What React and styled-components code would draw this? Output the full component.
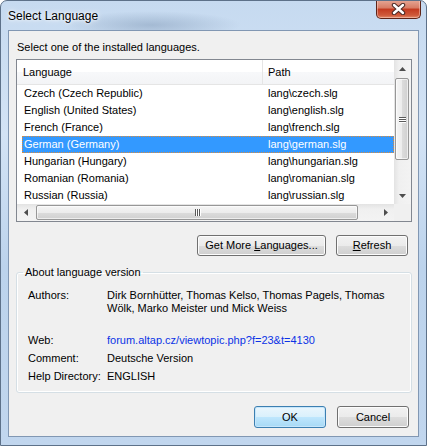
import React from "react";
import styled, { createGlobalStyle } from "styled-components";

const GlobalStyle = createGlobalStyle`
  html, body {
    margin: 0;
    padding: 0;
    background: #ffffff;
  }
  body {
    font-family: "Liberation Sans", Arial, sans-serif;
    font-size: 11px;
    color: #000;
  }
`;

const languages = [
  { name: "Czech (Czech Republic)", path: "lang\\czech.slg" },
  { name: "English (United States)", path: "lang\\english.slg" },
  { name: "French (France)", path: "lang\\french.slg" },
  { name: "German (Germany)", path: "lang\\german.slg", selected: true },
  { name: "Hungarian (Hungary)", path: "lang\\hungarian.slg" },
  { name: "Romanian (Romania)", path: "lang\\romanian.slg" },
  { name: "Russian (Russia)", path: "lang\\russian.slg" },
];

const CloseGlyph = () => (
  <svg width="15" height="12" viewBox="0 0 15 12">
    <path d="M3 2 L12 10 M12 2 L3 10" stroke="#4a2a26" strokeWidth="4.4" strokeLinecap="round" />
    <path d="M3 2 L12 10 M12 2 L3 10" stroke="#ffffff" strokeWidth="2.4" strokeLinecap="round" />
  </svg>
);

const Arrow = ({ dir }) => {
  const d = {
    up: "M0 4 L3.5 0 L7 4 Z",
    down: "M0 0 L3.5 4 L7 0 Z",
    left: "M4 0 L0 3.5 L4 7 Z",
    right: "M0 0 L4 3.5 L0 7 Z",
  }[dir];
  const vertical = dir === "up" || dir === "down";
  return (
    <svg width={vertical ? 7 : 4} height={vertical ? 4 : 7} viewBox={vertical ? "0 0 7 4" : "0 0 4 7"}>
      <path d={d} fill="#4d4d4d" />
    </svg>
  );
};

const App = () => {
  return (
    <>
      <GlobalStyle />
      <Window>
        <TitleBar>
          <Title>Select Language</Title>
          <CloseButton>
            <CloseGlyph />
          </CloseButton>
        </TitleBar>
        <Client>
          <Prompt>Select one of the installed languages.</Prompt>
          <ListView>
            <ListBody>
              <Header>
                <HeaderCell>Language</HeaderCell>
                <HeaderCell $sep>Path</HeaderCell>
              </Header>
              {languages.map((l) => (
                <Row key={l.name} $selected={l.selected}>
                  <Cell>{l.name}</Cell>
                  <Cell $second>{l.path}</Cell>
                </Row>
              ))}
            </ListBody>
            <VScroll>
              <ScrollArrow>
                <Arrow dir="up" />
              </ScrollArrow>
              <VThumb>
                <Grip $vertical>
                  <span />
                  <span />
                  <span />
                </Grip>
              </VThumb>
              <Spacer />
              <ScrollArrow>
                <Arrow dir="down" />
              </ScrollArrow>
            </VScroll>
            <HScroll>
              <ScrollArrow>
                <Arrow dir="left" />
              </ScrollArrow>
              <HThumb>
                <Grip>
                  <span />
                  <span />
                  <span />
                </Grip>
              </HThumb>
              <Spacer />
              <ScrollArrow>
                <Arrow dir="right" />
              </ScrollArrow>
            </HScroll>
            <Corner />
          </ListView>
          <ActionRow>
            <Button $width={129}>
              Get More{" "}<u>L</u>anguages...
            </Button>
            <Button $width={72}>
              <u>R</u>efresh
            </Button>
          </ActionRow>
          <Group>
            <Legend>About language version</Legend>
            <InfoGrid>
              <Label $tight>Authors:</Label>
              <Value $tight>
                Dirk Bornhütter, Thomas Kelso, Thomas Pagels, Thomas
                <br />
                Wölk, Marko Meister und Mick Weiss
              </Value>
              <Label $gap>Web:</Label>
              <Link $gap>forum.altap.cz/viewtopic.php?f=23&amp;t=4130</Link>
              <Label>Comment:</Label>
              <Value>Deutsche Version</Value>
              <Label>Help Directory:</Label>
              <Value>ENGLISH</Value>
            </InfoGrid>
          </Group>
          <FooterRow>
            <Button $width={72} $height={22} $default>
              OK
            </Button>
            <Button $width={72} $height={22}>
              Cancel
            </Button>
          </FooterRow>
        </Client>
      </Window>
    </>
  );
};

const Window = styled.div`
  width: 427px;
  height: 446px;
  box-sizing: border-box;
  border: 1px solid #5d7189;
  border-radius: 7px 7px 0 0;
  background:
    radial-gradient(ellipse 90px 14px at 150px 24px, rgba(120, 145, 175, 0.45), transparent),
    linear-gradient(180deg, #c6daf0 0%, #d3e3f5 30%, #bcd3ec 60%, #c1d6ee 100%);
  display: flex;
  flex-direction: column;
  overflow: hidden;
`;

const TitleBar = styled.div`
  height: 29px;
  display: flex;
  align-items: flex-start;
  justify-content: space-between;
  padding-left: 7px;
`;

const Title = styled.div`
  font-size: 12px;
  line-height: 16px;
  margin-top: 7px;
  color: #000;
  text-shadow: 0 0 6px #ffffff, 0 0 3px #ffffff;
`;

const CloseButton = styled.div`
  width: 45px;
  height: 19px;
  margin-top: -1px;
  margin-right: 5px;
  box-sizing: border-box;
  border: 1px solid #5e2418;
  border-top: none;
  border-radius: 0 0 5px 5px;
  background: linear-gradient(180deg, #e6a897 0%, #d77b63 45%, #c3391f 50%, #cf5a3b 85%, #e38c6c 100%);
  box-shadow: inset 0 0 0 1px rgba(255, 220, 210, 0.45);
  display: flex;
  align-items: center;
  justify-content: center;
`;

const Client = styled.div`
  flex: 1;
  margin: 0 7px 8px 7px;
  border: 1px solid #8197b3;
  background: #f0f0f0;
  display: flex;
  flex-direction: column;
  padding: 9px 7px 0 7px;
`;

const Prompt = styled.div`
  line-height: 15px;
  padding-left: 1px;
`;

const ListView = styled.div`
  margin-top: 4px;
  width: 396px;
  height: 163px;
  box-sizing: border-box;
  border: 1px solid #828790;
  background: #ffffff;
  display: grid;
  grid-template-columns: 1fr 17px;
  grid-template-rows: 1fr 17px;
`;

const ListBody = styled.div`
  overflow: hidden;
`;

const Header = styled.div`
  display: grid;
  grid-template-columns: 245px 1fr;
  height: 24px;
  border-bottom: 1px solid #e5e5e5;
  background: linear-gradient(180deg, #ffffff 0%, #ffffff 50%, #f7f8fa 51%, #f3f4f6 100%);
`;

const HeaderCell = styled.div`
  line-height: 24px;
  padding-left: ${(p) => (p.$sep ? "5px" : "6px")};
  border-left: ${(p) => (p.$sep ? "1px solid #e5e5e5" : "none")};
`;

const Row = styled.div`
  display: grid;
  grid-template-columns: 239px 1fr;
  height: 17px;
  box-sizing: border-box;
  margin-left: 5px;
  line-height: 15px;
  border: 1px dotted ${(p) => (p.$selected ? "#d98b3e" : "transparent")};
  background: ${(p) => (p.$selected ? "#3399ff" : "transparent")};
  color: ${(p) => (p.$selected ? "#ffffff" : "#000000")};
`;

const Cell = styled.div`
  padding-left: ${(p) => (p.$second ? "6px" : "1px")};
  white-space: nowrap;
`;

const VScroll = styled.div`
  background: linear-gradient(90deg, #e3e3e3 0%, #f0f0f0 30%, #f3f3f3 100%);
  display: flex;
  flex-direction: column;
`;

const HScroll = styled.div`
  background: linear-gradient(180deg, #e3e3e3 0%, #f0f0f0 30%, #f3f3f3 100%);
  display: flex;
`;

const Corner = styled.div`
  background: #f0f0f0;
`;

const ScrollArrow = styled.div`
  width: 17px;
  height: 17px;
  flex: none;
  display: flex;
  align-items: center;
  justify-content: center;
`;

const Spacer = styled.div`
  flex: 1;
`;

const VThumb = styled.div`
  margin: 1px 0 0 1px;
  width: 14px;
  height: 82px;
  box-sizing: border-box;
  border: 1px solid #979797;
  border-radius: 2px;
  background: linear-gradient(90deg, #f5f5f5 0%, #ececec 50%, #dcdcdc 51%, #d0d0d0 100%);
  box-shadow: inset 0 0 0 1px rgba(255, 255, 255, 0.6);
  display: flex;
  align-items: center;
  justify-content: center;
`;

const HThumb = styled.div`
  margin: 1px 0 0 2px;
  width: 322px;
  height: 15px;
  box-sizing: border-box;
  border: 1px solid #979797;
  border-radius: 2px;
  background: linear-gradient(180deg, #f5f5f5 0%, #ececec 50%, #dcdcdc 51%, #d0d0d0 100%);
  box-shadow: inset 0 0 0 1px rgba(255, 255, 255, 0.6);
  display: flex;
  align-items: center;
  justify-content: center;
`;

const Grip = styled.div`
  display: flex;
  flex-direction: ${(p) => (p.$vertical ? "column" : "row")};
  gap: 1px;
  span {
    display: block;
    width: ${(p) => (p.$vertical ? "7px" : "1px")};
    height: ${(p) => (p.$vertical ? "1px" : "7px")};
    background: #5a5a5a;
    box-shadow: ${(p) => (p.$vertical ? "0 1px 0 #ffffff" : "1px 0 0 #ffffff")};
  }
`;

const ActionRow = styled.div`
  display: flex;
  justify-content: flex-end;
  gap: 10px;
  margin-top: 13px;
  padding-right: 3px;
`;

const Button = styled.div`
  width: ${(p) => p.$width}px;
  height: ${(p) => p.$height || 21}px;
  box-sizing: border-box;
  border: 1px solid ${(p) => (p.$default ? "#3c7fb1" : "#707070")};
  border-radius: 3px;
  background: ${(p) =>
    p.$default
      ? "linear-gradient(180deg, #eaf6fd 0%, #d9f0fc 50%, #bee6fd 51%, #a7d9f5 100%)"
      : "linear-gradient(180deg, #f2f2f2 0%, #ebebeb 50%, #dddddd 51%, #cfcfcf 100%)"};
  box-shadow: inset 0 0 0 1px ${(p) => (p.$default ? "#c6e6fb" : "#fcfcfc")};
  display: flex;
  align-items: center;
  justify-content: center;
  line-height: 15px;
  color: #000;
  white-space: pre;
  u {
    text-decoration: underline;
    text-underline-offset: 1px;
  }
`;

const Group = styled.fieldset`
  margin: 9px 0 0 0;
  width: 396px;
  height: 128px;
  box-sizing: border-box;
  border: 1px solid #d5dfe5;
  border-radius: 3px;
  box-shadow: inset 0 0 0 1px #ffffff;
  padding: 9px 8px 0 11px;
`;

const Legend = styled.legend`
  padding: 0 2px;
  margin-left: -5px;
  line-height: 15px;
`;

const InfoGrid = styled.div`
  display: grid;
  grid-template-columns: 79px 1fr;
  line-height: 18px;
`;

const Label = styled.div`
  line-height: ${(p) => (p.$tight ? "13px" : "18px")};
  margin-top: ${(p) => (p.$gap ? "16px" : "0")};
`;

const Value = styled.div`
  line-height: ${(p) => (p.$tight ? "13px" : "18px")};
  white-space: nowrap;
`;

const Link = styled.div`
  color: #0b33e6;
  line-height: 18px;
  margin-top: ${(p) => (p.$gap ? "16px" : "0")};
`;

const FooterRow = styled.div`
  display: flex;
  justify-content: flex-end;
  gap: 11px;
  margin-top: 13px;
  padding-right: 2px;
`;

export default App;
